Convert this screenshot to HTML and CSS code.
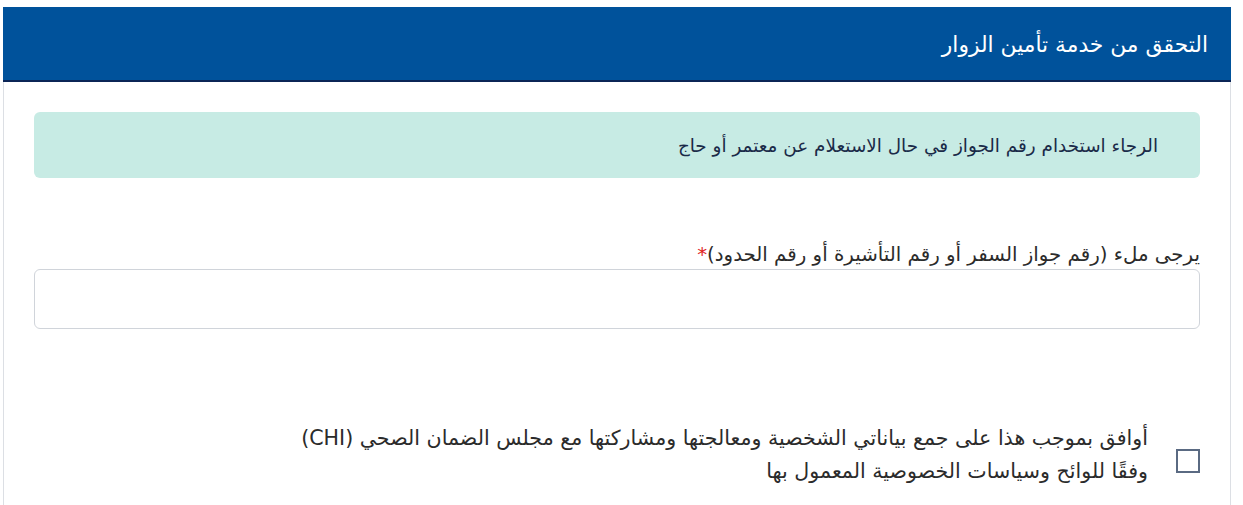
FILE: index.html
```html
<!DOCTYPE html>
<html lang="ar" dir="rtl">
<head>
<meta charset="utf-8">
<title>التحقق من خدمة تأمين الزوار</title>
<link rel="stylesheet" href="styles.css">
</head>
<body>
<div class="card">
  <div class="card-header">التحقق من خدمة تأمين الزوار</div>
  <div class="card-body">
    <div class="alert">الرجاء استخدام رقم الجواز في حال الاستعلام عن معتمر أو حاج</div>
    <div class="field">
      <label class="label" for="doc">يرجى ملء (رقم جواز السفر أو رقم التأشيرة أو رقم الحدود)<span class="req">*</span></label>
      <input class="input" id="doc" type="text">
    </div>
    <div class="consent">
      <span class="check"></span>
      <p class="consent-text">أوافق بموجب هذا على جمع بياناتي الشخصية ومعالجتها ومشاركتها مع مجلس الضمان الصحي (CHI)<br>وفقًا للوائح وسياسات الخصوصية المعمول بها</p>
    </div>
  </div>
</div>
</body>
</html>
```
FILE: styles.css
```css
* { box-sizing: border-box; }
html, body { margin: 0; background: #fff; }
body {
  padding: 7px 12px 0 3px;
  font-family: "DejaVu Sans", sans-serif;
  color: #2b2b2b;
}
.card {
  border: 1px solid #dcdfe4;
  border-top: none;
  border-bottom: none;
  height: 498px;
}
.card-header {
  background: #00529b;
  color: #fff;
  height: 75px;
  margin: 0 -1px;
  border-bottom: 2px solid #0b2556;
  padding: 2px 23px 0;
  display: flex;
  align-items: center;
  font-size: 21.8px;
}
.card-body {
  padding: 30px 30px 0;
}
.alert {
  background: #c7ebe4;
  color: #1a2a48;
  border-radius: 6px;
  padding: 22px 42px 20px;
  font-size: 18.4px;
  line-height: 24px;
}
.field {
  margin-top: 66px;
  display: flex;
  flex-direction: column;
  gap: 3px;
}
.label {
  font-size: 19.8px;
  line-height: 22px;
  color: #2b2b2b;
}
.req { color: #e02424; }
.input {
  height: 60px;
  border: 1px solid #d0d4da;
  border-radius: 6px;
  background: #fff;
  font: inherit;
}
.consent {
  margin-top: 93px;
  display: flex;
  align-items: flex-start;
  gap: 28px;
}
.check {
  flex: none;
  width: 24px;
  height: 24px;
  border: 2px solid #5a6a82;
  margin-top: 27px;
}
.consent-text {
  margin: 0;
  font-size: 20.6px;
  line-height: 33px;
  color: #2b2b2b;
}
```
